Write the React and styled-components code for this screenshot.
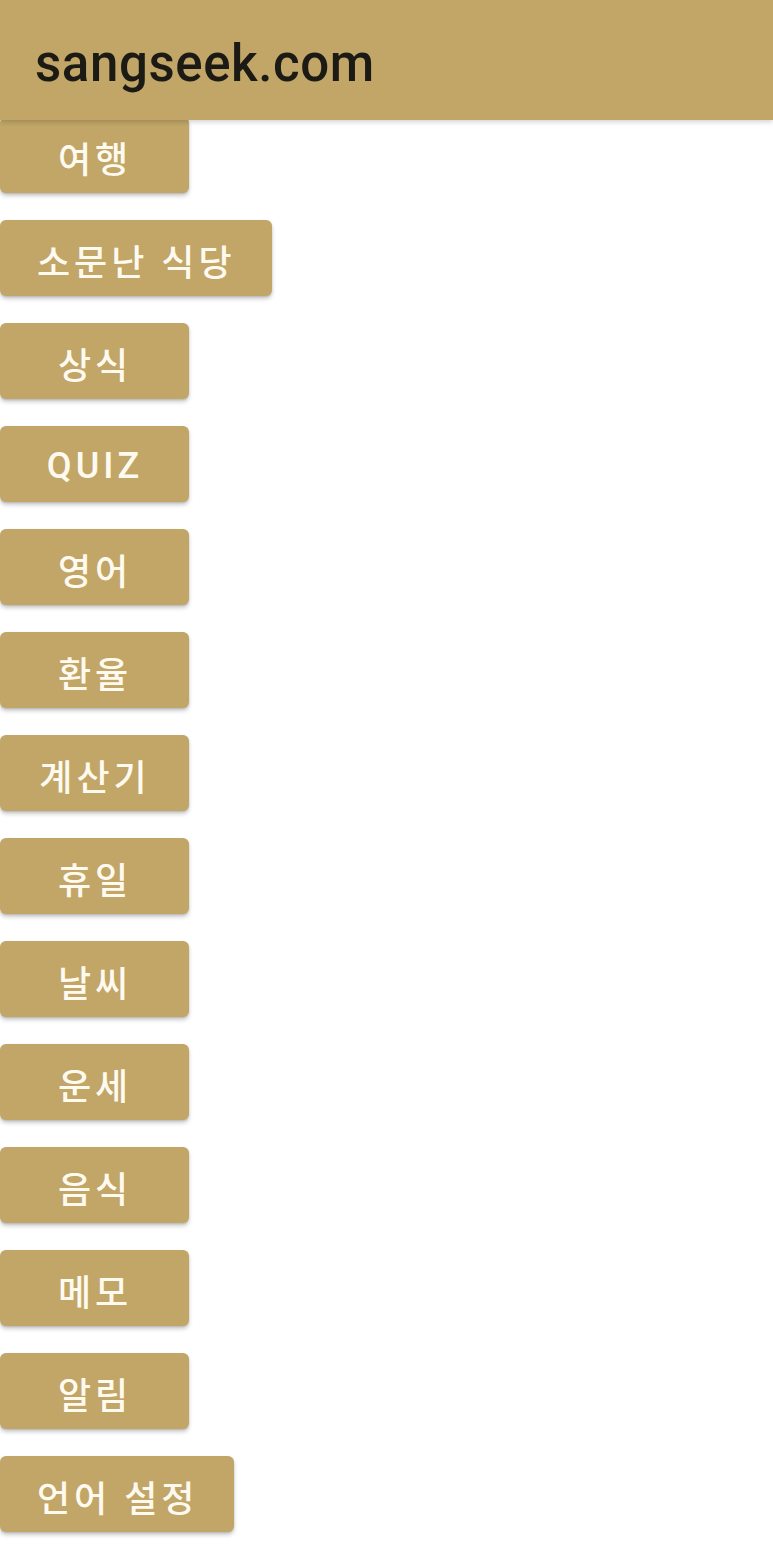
import React from 'react'
import styled, { createGlobalStyle } from 'styled-components'

const GlobalStyle = createGlobalStyle`
  html, body {
    margin: 0;
    padding: 0;
    background: #ffffff;
  }
  body {
    font-family: Roboto, "Noto Sans CJK KR", sans-serif;
  }
`

const menu = [
  '여행',
  '소문난 식당',
  '상식',
  'QUIZ',
  '영어',
  '환율',
  '계산기',
  '휴일',
  '날씨',
  '운세',
  '음식',
  '메모',
  '알림',
  '언어 설정',
]

export default function App() {
  return (
    <Page>
      <GlobalStyle />
      <Header>
        <Title>sangseek.com</Title>
      </Header>
      <Menu>
        {menu.map((label) => (
          <MenuButton key={label}>{label}</MenuButton>
        ))}
      </Menu>
    </Page>
  )
}

const Page = styled.div`
  width: 773px;
  min-height: 1561px;
  background: #ffffff;
`

const Header = styled.header`
  position: relative;
  z-index: 2;
  height: 120px;
  box-sizing: border-box;
  background: #c1a667;
  display: flex;
  align-items: center;
  padding: 6px 0 0 35px;
  box-shadow: 0 2px 5px rgba(0, 0, 0, 0.18);
`

const Title = styled.h1`
  margin: 0;
  font-family: Roboto, sans-serif;
  font-weight: 500;
  font-size: 51px;
  color: #1c1a14;
  letter-spacing: 0.6px;
`

const Menu = styled.nav`
  display: flex;
  flex-direction: column;
  align-items: flex-start;
  gap: 27px;
  margin-top: -3px;
`

const MenuButton = styled.button`
  min-width: 189px;
  height: 76px;
  padding: 3px 36px 0 37px;
  border: none;
  border-radius: 6px;
  background: #c1a667;
  color: #fffaf0;
  font-family: Roboto, "Noto Sans CJK KR", sans-serif;
  font-weight: 500;
  font-size: 36px;
  letter-spacing: 4px;
  box-shadow: 0 3px 4px rgba(0, 0, 0, 0.2), 0 1px 2px rgba(0, 0, 0, 0.12);
  cursor: pointer;
`
